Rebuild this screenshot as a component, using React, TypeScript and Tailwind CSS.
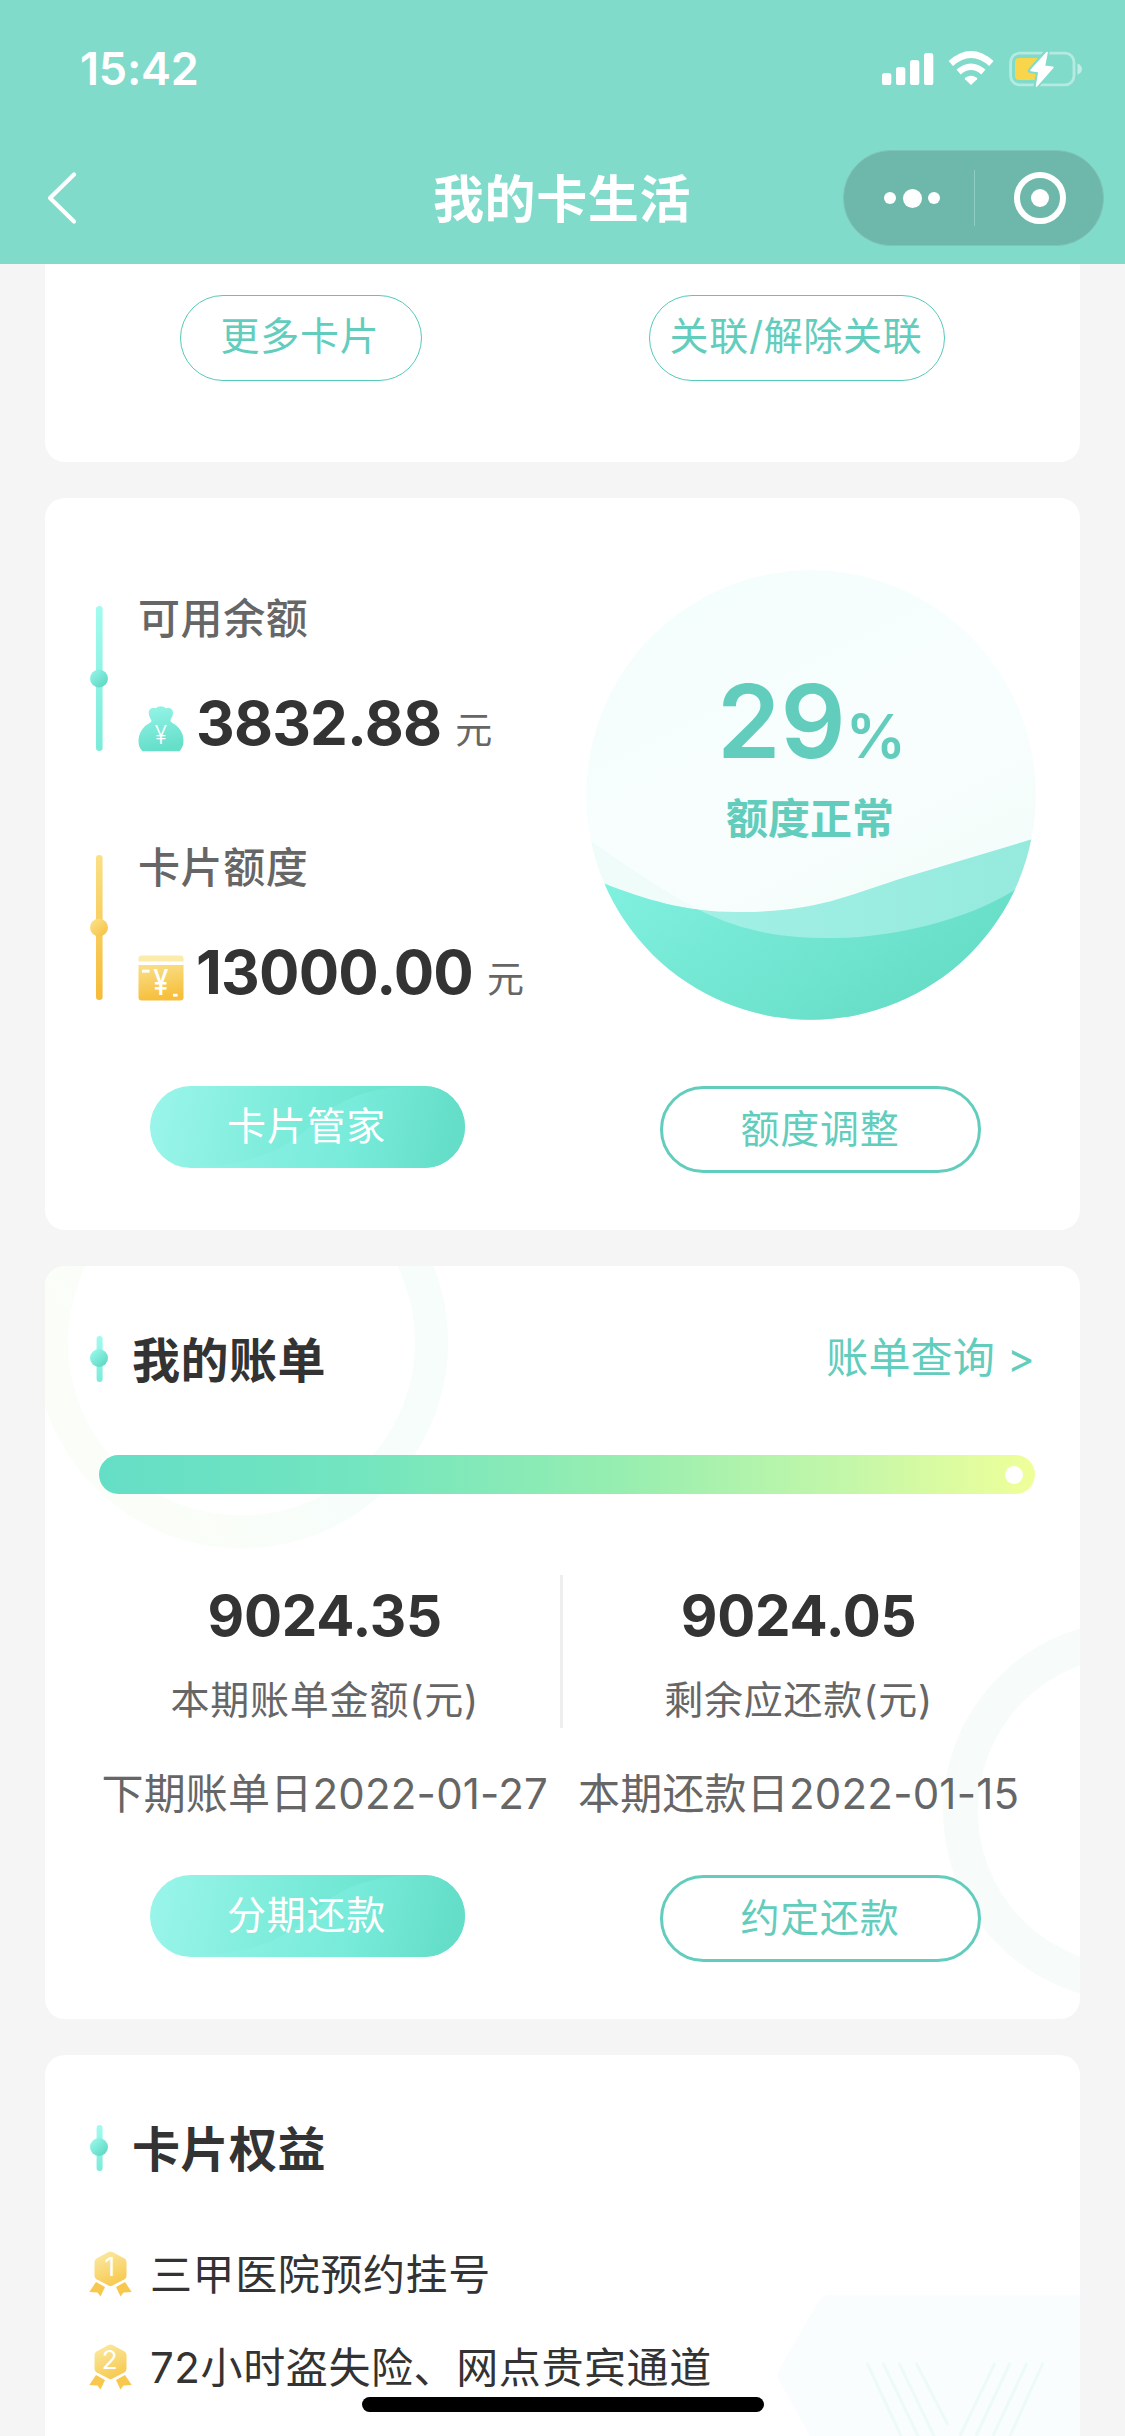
import React from "react";

const FONT = "font-['Inter','Noto_Sans_CJK_SC',sans-serif]";

function StatusIcons() {
  return (
    <svg width="204" height="40" viewBox="880 49 204 40" className="block">
      <g fill="#fff">
        <rect x="882" y="73" width="9.3" height="12" rx="2.6" />
        <rect x="896" y="67" width="9.3" height="18" rx="2.6" />
        <rect x="910" y="60" width="9.3" height="25" rx="2.6" />
        <rect x="924" y="53" width="9.3" height="32" rx="2.6" />
        <path d="M971 85 L965 79.2 Q964.4 78.4 965.2 77.8 Q971 73.8 976.8 77.8 Q977.6 78.4 977 79.2 Z" />
      </g>
      <path d="M950.8 63.5 Q971 45.5 991.4 63.5" fill="none" stroke="#fff" strokeWidth="6.6" />
      <path d="M958.6 72 Q971 61.5 983.4 72" fill="none" stroke="#fff" strokeWidth="6.4" />
      <rect x="1010.6" y="53.2" width="63.4" height="31.6" rx="9" fill="none" stroke="#fff" strokeOpacity=".42" strokeWidth="2.8" />
      <path d="M1077.5 63.5 Q1082 65.5 1082 69 T1077.5 74.8 Z" fill="#fff" fillOpacity=".5" />
      <rect x="1015" y="58" width="25" height="22" rx="4" fill="#f8d54a" />
      <path
        d="M1047 51.5 L1030.4 70.6 L1038.6 72 L1036 86.5 L1053.2 67.2 L1044.6 66 Z"
        fill="#fff"
        stroke="#80dbcb"
        strokeWidth="5"
        strokeLinejoin="round"
      />
      <path
        d="M1047 52.5 L1031 70.4 L1039 71.6 L1036.6 86 L1052.8 67.4 L1044.4 66.2 Z"
        fill="#fff"
        stroke="#fff"
        strokeWidth="1.6"
        strokeLinejoin="round"
      />
    </svg>
  );
}

function Header() {
  return (
    <header className="relative z-10 h-[264px] bg-[#80dbcb] text-white">
      <div className="flex h-[138px] items-start justify-between pl-[80px] pr-[41px] pt-[49px]">
        <span className="text-[45px] font-semibold leading-[40px] tracking-[-0.2px]">15:42</span>
        <StatusIcons />
      </div>
      <div className="flex h-[126px] items-start pl-[44px] pr-[21px] pt-[12px]">
        <svg width="36" height="56" viewBox="44 170 36 56" className="mt-[20px] block">
          <path d="M74 174.5 L50 198 L74 221.5" fill="none" stroke="#fff" strokeWidth="4.2" strokeLinecap="round" strokeLinejoin="round" />
        </svg>
        <h1 className="ml-[353px] mt-[24px] text-[51px] font-bold leading-[52px] tracking-[0.6px]">我的卡生活</h1>
        <div className="ml-auto flex h-[96px] w-[261px] items-center rounded-full border border-[#7fc4b8] bg-[#6db8ab]">
          <div className="flex w-[130px] items-center justify-center gap-[6.5px] pl-[6px]">
            <i className="size-3 rounded-full bg-white" />
            <i className="size-[19px] rounded-full bg-white" />
            <i className="size-3 rounded-full bg-white" />
          </div>
          <i className="h-[56px] w-px bg-[#8dcdc2]" />
          <div className="flex flex-1 items-center justify-center pl-[2px]">
            <div className="flex size-[52px] items-center justify-center rounded-full border-[6.5px] border-white">
              <i className="size-[18px] rounded-full bg-white" />
            </div>
          </div>
        </div>
      </div>
    </header>
  );
}

function Rail({ id, from, to, top, end }: { id: string; from: string; to: string; top: string; end: string }) {
  return (
    <svg width="18" height="145" viewBox="0 0 18 145" className="mt-[8px] block">
      <defs>
        <linearGradient id={id + "l"} x1="0" y1="0" x2="0" y2="1">
          <stop offset="0" stopColor={from} />
          <stop offset="1" stopColor={to} />
        </linearGradient>
        <linearGradient id={id + "d"} x1="0.1" y1="0.1" x2="0.8" y2="0.9">
          <stop offset="0" stopColor={top} />
          <stop offset="1" stopColor={end} />
        </linearGradient>
      </defs>
      <rect x="6" y="0" width="6.6" height="145" rx="3.3" fill={`url(#${id}l)`} />
      <circle cx="9" cy="72.5" r="9" fill={`url(#${id}d)`} />
    </svg>
  );
}

function Bullet({ id }: { id: string }) {
  return (
    <svg width="18" height="46" viewBox="0 0 18 46" className="block">
      <defs>
        <linearGradient id={id + "l"} x1="0" y1="0" x2="0" y2="1">
          <stop offset="0" stopColor="#a2fbef" />
          <stop offset="1" stopColor="#7cebda" />
        </linearGradient>
        <linearGradient id={id + "d"} x1="0.1" y1="0.1" x2="0.8" y2="0.9">
          <stop offset="0" stopColor="#98f8ea" />
          <stop offset="1" stopColor="#62d9c5" />
        </linearGradient>
      </defs>
      <rect x="6.6" y="0" width="6" height="46" rx="3" fill={`url(#${id}l)`} />
      <circle cx="9" cy="22" r="9" fill={`url(#${id}d)`} />
    </svg>
  );
}

function BagIcon() {
  return (
    <svg width="46" height="46" viewBox="0 0 46 46" className="block overflow-visible">
      <defs>
        <linearGradient id="bag" x1="0" y1="0" x2="0.2" y2="1">
          <stop offset="0" stopColor="#96f5e9" />
          <stop offset="1" stopColor="#66dfc9" />
        </linearGradient>
      </defs>
      <path
        d="M13.5 14.8 C11.5 11 10 8 11 4.6 Q13 .8 17.4 2.2 Q23 -1.6 28 2.2 Q32.6 .8 34.6 4.4 Q36 8 32.4 14 Q32.4 16 34.5 17 C41 20.4 45.5 27 45.5 34.5 Q45.6 41 41.5 45.3 L4.6 45.3 Q.3 41.5 .5 34.5 C.8 27 5 20.3 11.5 17 Q13.6 16 13.5 14.8 Z"
        fill="url(#bag)"
      />
      <text transform="translate(22.8 38) scale(.9 1)" textAnchor="middle" fontSize="25" fontWeight="300" fontFamily="Inter" fill="#fff">¥</text>
    </svg>
  );
}

function LimitIcon() {
  return (
    <svg width="46" height="46" viewBox="0 0 46 46" className="block overflow-visible">
      <defs>
        <linearGradient id="lim" x1="0" y1="0" x2="0.2" y2="1">
          <stop offset="0" stopColor="#f9e08a" />
          <stop offset="1" stopColor="#f7bf3c" />
        </linearGradient>
      </defs>
      <path d="M.5 6.6 V3.5 Q.5 .5 3.5 .5 H42.5 Q45.5 .5 45.5 3.5 V6.6 Z" fill="#fcecac" />
      <path d="M.5 10 H45.5 V42.5 Q45.5 45.5 42.5 45.5 H3.5 Q.5 45.5 .5 42.5 Z" fill="url(#lim)" />
      <rect x="4" y="14.6" width="7.5" height="3" fill="#fff" />
      <rect x="35" y="38.8" width="4.6" height="2.8" fill="#fff" />
      <text transform="translate(22.8 40) scale(.78 1)" textAnchor="middle" fontSize="35" fontWeight="500" fontFamily="Inter" fill="#fff">¥</text>
    </svg>
  );
}

function Amount({ label, value, icon, rail }: { label: string; value: string; icon: React.ReactNode; rail: React.ReactNode }) {
  return (
    <div className="flex h-[249px] pl-[45px] pt-[28px]">
      {rail}
      <div className="ml-[30px]">
        <div className="text-[42px] font-medium leading-none tracking-[0.6px] text-[#666]">{label}</div>
        <div className="mt-[52px] flex items-start">
          <div className="mt-[14px]">{icon}</div>
          <span className="ml-[12px] mt-px text-[60px] font-bold leading-none tracking-[-0.8px] text-[#333]">{value}</span>
          <span className="ml-[14px] mt-[20px] text-[37px] leading-none text-[#666]">元</span>
        </div>
      </div>
    </div>
  );
}

function Gauge() {
  return (
    <div className="relative size-[450px]">
      <svg width="450" height="450" viewBox="0 0 450 450" className="absolute inset-0">
        <defs>
          <linearGradient id="gbg" x1="0.2" y1="0" x2="0.7" y2="1">
            <stop offset="0" stopColor="#f4fefd" />
            <stop offset="0.5" stopColor="#f8fefd" />
            <stop offset="1" stopColor="#f2fcfa" />
          </linearGradient>
          <linearGradient id="gdark" x1="0" y1="0.2" x2="1" y2="0.8">
            <stop offset="0" stopColor="#82f2e1" />
            <stop offset="1" stopColor="#62dac2" />
          </linearGradient>
          <linearGradient id="glight" x1="0" y1="0" x2="1" y2="0">
            <stop offset="0" stopColor="#a6f1e8" />
            <stop offset="1" stopColor="#95eadd" />
          </linearGradient>
          <clipPath id="gc">
            <circle cx="225" cy="225" r="224.7" />
          </clipPath>
          <clipPath id="gw">
            <path d="M0 268 C40 295 75 320 113 340 C170 368 215 368 251 368 C310 367 380 350 427 321 L450 305 V450 H0 Z" />
          </clipPath>
        </defs>
        <g clipPath="url(#gc)">
          <rect width="450" height="450" fill="url(#gbg)" />
          <rect width="450" height="450" fill="#effcfa" clipPath="url(#gw)" />
          <path d="M0 305 L17 313 C60 330 100 342 150 342 C230 343 265 324 320 307 L450 268 V450 H0 Z" fill="url(#glight)" />
          <path d="M0 305 L17 313 C60 330 100 342 150 342 C230 343 265 324 320 307 L450 268 V450 H0 Z" fill="url(#gdark)" clipPath="url(#gw)" />
        </g>
      </svg>
      <div className="relative flex flex-col items-center pt-[100px] text-[#62cdbd]">
        <div className="flex items-baseline">
          <span className="text-[102px] font-semibold leading-none">29</span>
          <span className="text-[60px] font-semibold leading-none tracking-[-1px]">%</span>
        </div>
        <div className="mt-[26px] pr-[2px] text-[42px] font-bold leading-none">额度正常</div>
      </div>
    </div>
  );
}

function Actions({ primary, secondary, id }: { primary: string; secondary: string; id: string }) {
  return (
    <div className="relative flex items-start pl-[105px]">
      <button className="relative h-[82px] w-[315px] overflow-hidden rounded-full">
        <svg width="315" height="82" viewBox="0 0 315 82" className="absolute inset-0">
          <defs>
            <linearGradient id={id + "a"} gradientUnits="userSpaceOnUse" x1="0" y1="20" x2="300" y2="70">
              <stop offset="0" stopColor="#9af5ea" />
              <stop offset="0.6" stopColor="#72e8d5" />
              <stop offset="1" stopColor="#64dec8" />
            </linearGradient>
            <linearGradient id={id + "b"} gradientUnits="userSpaceOnUse" x1="50" y1="20" x2="300" y2="70">
              <stop offset="0" stopColor="#90f2e5" />
              <stop offset="0.6" stopColor="#78ebda" />
              <stop offset="1" stopColor="#64dec8" />
            </linearGradient>
          </defs>
          <rect width="315" height="82" fill={`url(#${id}a)`} />
          <path d="M50 80 C110 78 140 60 165 36 C190 12 220 2 262 0 H315 V82 H50 Z" fill={`url(#${id}b)`} />
        </svg>
        <span className="relative block pb-[2px] pr-[2px] text-[39px] leading-[80px] tracking-[0.8px] text-white">{primary}</span>
      </button>
      <button className="ml-[195px] h-[87px] w-[321px] rounded-full border-[3px] border-[#62cdbd] bg-white pb-[3px] pr-[1px] text-[39px] leading-[75px] tracking-[0.8px] text-[#62cdbd]">
        {secondary}
      </button>
    </div>
  );
}

function Stat({ value, label, note }: { value: string; label: string; note: string }) {
  return (
    <div className="flex flex-col items-center whitespace-nowrap text-[#666]">
      <span className="text-[56.5px] font-bold leading-[57px] tracking-[-0.2px] text-[#333]">{value}</span>
      <span className="mt-[36px] text-[39px] leading-none tracking-[0.8px]">{label}</span>
      <span className="mt-[54px] text-[42px] leading-none tracking-[0.2px]">{note}</span>
    </div>
  );
}

function Medal({ n, id }: { n: string; id: string }) {
  return (
    <svg width="43" height="46" viewBox="0 0 43 46" className="block">
      <defs>
        <linearGradient id={id} x1="0.2" y1="0" x2="0.6" y2="1">
          <stop offset="0" stopColor="#fbe9a2" />
          <stop offset="1" stopColor="#f7c94f" />
        </linearGradient>
      </defs>
      <path d="M7 31 L16 36 L11.5 45.5 L8.5 41.5 L.3 41 Z" fill="#f8c84e" />
      <path d="M36 31 L27 36 L31.5 45.5 L34.5 41.5 L42.7 41 Z" fill="#f8c84e" />
      <path d="M19.5 1 Q21.5 0 23.5 1 L35.5 7.4 Q37.5 8.6 37.5 11 V24.5 Q37.5 27 35.5 28.2 L23.5 34.6 Q21.5 35.6 19.5 34.6 L7.5 28.2 Q5.5 27 5.5 24.5 V11 Q5.5 8.6 7.5 7.4 Z" fill={`url(#${id})`} />
      <text x="21" y="25.2" textAnchor="middle" fontSize="26" fontFamily="Inter" fill="#fff">{n}</text>
    </svg>
  );
}

export default function App() {
  return (
    <div className={`relative h-[2436px] w-[1125px] overflow-hidden bg-[#f5f5f5] ${FONT}`}>
      <Header />
      <main className="flex flex-col gap-[36px] px-[45px]">
        <section className="flex h-[198px] items-start rounded-b-[20px] bg-white pl-[135px] pt-[31px] text-[39px] tracking-[0.7px] text-[#62cdbd]">
          <button className="h-[86px] w-[242px] rounded-full border border-[#54cab8] pr-[2px] leading-[78px]">
            <span className="block pb-[4px]">更多卡片</span>
          </button>
          <button className="ml-[227px] h-[86px] w-[296px] rounded-full border border-[#54cab8] pr-[2px] leading-[78px]">
            <span className="block pb-[4px]">关联/解除关联</span>
          </button>
        </section>

        <section className="h-[732px] rounded-[20px] bg-white pt-[72px]">
          <div className="flex">
            <div className="w-[541px]">
              <Amount
                label="可用余额"
                value="3832.88"
                icon={<BagIcon />}
                rail={<Rail id="r1" from="#a2fbef" to="#7cebda" top="#92f3e5" end="#62d9c5" />}
              />
              <Amount
                label="卡片额度"
                value="13000.00"
                icon={<LimitIcon />}
                rail={<Rail id="r2" from="#fae085" to="#f6bb38" top="#fbe08a" end="#f7c548" />}
              />
            </div>
            <Gauge />
          </div>
          <div className="mt-[18px]">
            <Actions primary="卡片管家" secondary="额度调整" id="b1" />
          </div>
        </section>

        <section className="relative h-[753px] overflow-hidden rounded-[20px] bg-white">
          <svg width="1035" height="753" viewBox="45 1266 1035 753" className="absolute inset-0">
            <defs>
              <linearGradient id="ring" x1="0.6" y1="0.5" x2="0.2" y2="0.75">
                <stop offset="0" stopColor="#f6fdfb" />
                <stop offset="1" stopColor="#fbfef8" />
              </linearGradient>
            </defs>
            <circle cx="241.5" cy="1342" r="190" fill="none" stroke="url(#ring)" strokeWidth="33" />
            <circle cx="1133" cy="1811" r="172.5" fill="none" stroke="#f7fcfb" strokeWidth="35" />
          </svg>
          <div className="relative flex h-[189px] items-start pl-[45px] pr-[45px] pt-[70px]">
            <Bullet id="t1" />
            <h2 className="ml-[24px] mt-px text-[48px] font-bold leading-none tracking-[0.5px] text-[#333]">我的账单</h2>
            <a className="ml-auto mt-[1px] text-[42px] leading-none tracking-[0.2px] text-[#62cdbd]">账单查询 &gt;</a>
          </div>
          <div className="relative ml-[54px] flex h-[39px] w-[936px] items-center justify-end rounded-full bg-[linear-gradient(90deg,#64dec6_0%,#73e5bf_28%,#97eeb0_56%,#c4f7a9_80%,#efff99_100%)] pr-[12px]">
            <i className="size-[18px] rounded-full bg-white" />
          </div>
          <div className="relative flex h-[300px] pt-[81px]">
            <div className="flex w-[515px] justify-end pr-[12px] pt-[12px]">
              <Stat value="9024.35" label="本期账单金额(元)" note="下期账单日2022-01-27" />
            </div>
            <i className="h-[153px] w-[3px] bg-[#eee]" />
            <div className="pl-[15px] pt-[12px]">
              <Stat value="9024.05" label="剩余应还款(元)" note="本期还款日2022-01-15" />
            </div>
          </div>
          <div className="mt-[81px]">
            <Actions primary="分期还款" secondary="约定还款" id="b2" />
          </div>
        </section>

        <section className="relative h-[420px] overflow-hidden rounded-t-[20px] bg-white text-[#333]">
          <svg width="310" height="145" viewBox="770 2291 310 145" className="absolute bottom-[39px] right-0">
            <path d="M830 2295 H1080 V2436 H810 L780 2382 Q776 2375 780 2368 L818 2302 Q822 2295 830 2295 Z" fill="#f9fdfd" />
            <path
              d="M867 2363 L901 2436 M883 2363 L918 2436 M899 2363 L934 2436 M916 2363 L948 2425 M995 2363 L960 2436 M1010 2363 L976 2436 M1027 2363 L993 2436 M1043 2363 L1010 2436"
              fill="none"
              stroke="#edfaf7"
              strokeWidth="3"
            />
          </svg>
          <div className="relative flex h-[196px] items-start pl-[45px] pt-[70px]">
            <Bullet id="t2" />
            <h2 className="ml-[24px] mt-px text-[48px] font-bold leading-none tracking-[0.5px]">卡片权益</h2>
          </div>
          <ul className="relative flex flex-col gap-[47px] pl-[44px] text-[42px] leading-[48px] tracking-[0.6px]">
            <li className="flex h-[46px] items-start">
              <Medal n="1" id="m1" />
              <span className="ml-[18px]">三甲医院预约挂号</span>
            </li>
            <li className="flex h-[46px] items-start">
              <Medal n="2" id="m2" />
              <span className="ml-[18px]">72小时盗失险、网点贵宾通道</span>
            </li>
          </ul>
        </section>
      </main>
      <i className="absolute left-[362px] top-[2397px] h-[15px] w-[402px] rounded-full bg-black" />
    </div>
  );
}
